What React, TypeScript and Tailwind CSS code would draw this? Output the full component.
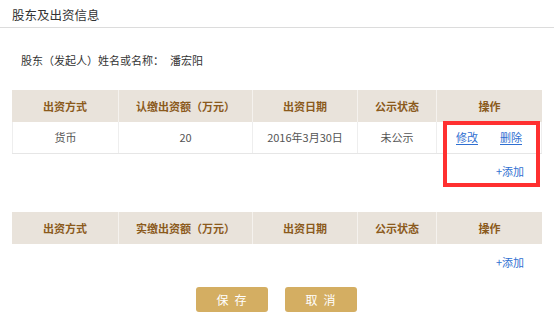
import React from 'react';

const cols = ['w-[106px]', 'w-[134px]', 'w-[105px]', 'w-[79px]', 'w-[106px]'];

const HeaderRow: React.FC<{ labels: string[] }> = ({ labels }) => (
  <div className="flex h-[32px] bg-[#e9e3db] text-[#8b5a1c] font-bold">
    {labels.map((l, i) => (
      <div
        key={l}
        className={`${cols[i]} flex items-center justify-center ${i > 0 ? 'border-l border-[#f5f2ee]' : ''}`}
      >
        {l}
      </div>
    ))}
  </div>
);

const AddRow: React.FC<{ h: string }> = ({ h }) => (
  <div className={`flex ${h} items-center justify-end pr-[18px]`}>
    <a className="text-[#2f6fd1] cursor-pointer">+添加</a>
  </div>
);

export default function App() {
  return (
    <div className="w-[554px] h-[318px] bg-white text-[11px] text-[#333] font-['Noto_Sans_CJK_SC',sans-serif]">
      <div className="h-[28px] border-b border-[#dcdcdc] pl-[12px] pt-[6px] text-[12.5px] leading-[18px] text-[#333]">
        股东及出资信息
      </div>

      <div className="mt-[22px] pl-[21px] leading-[20px] flex">
        <span>股东（发起人）姓名或名称：</span>
        <span className="ml-[6px]">潘宏阳</span>
      </div>

      <div className="relative mx-[12px] mt-[20px]">
        <HeaderRow labels={['出资方式', '认缴出资额（万元）', '出资日期', '公示状态', '操作']} />
        <div className="flex h-[32px] border-b border-[#e6e6e6] text-[#555]">
          <div className={`${cols[0]} flex items-center justify-center border-l border-[#eee]`}>货币</div>
          <div className={`${cols[1]} flex items-center justify-center border-l border-[#eee]`}>20</div>
          <div className={`${cols[2]} flex items-center justify-center border-l border-[#eee]`}>2016年3月30日</div>
          <div className={`${cols[3]} flex items-center justify-center border-l border-[#eee]`}>未公示</div>
          <div className={`${cols[4]} flex items-center justify-center gap-[22px] border-x border-[#eee]`}>
            <a className="text-[#2f6fd1] underline underline-offset-2 cursor-pointer">修改</a>
            <a className="text-[#2f6fd1] underline underline-offset-2 cursor-pointer">删除</a>
          </div>
        </div>
        <AddRow h="h-[34px]" />
        <div className="absolute left-[431px] top-[31px] w-[97px] h-[66px] border-[4px] border-[#ff3030]" />
      </div>

      <div className="mx-[12px] mt-[24px]">
        <HeaderRow labels={['出资方式', '实缴出资额（万元）', '出资日期', '公示状态', '操作']} />
        <AddRow h="h-[36px]" />
      </div>

      <div className="mt-[7px] flex justify-center gap-[17px] pr-[2px]">
        <button className="w-[72px] h-[25px] rounded-[3px] bg-[#d4ae62] text-white text-[12px] tracking-[6px] pl-[6px]">
          保存
        </button>
        <button className="w-[72px] h-[25px] rounded-[3px] bg-[#d4ae62] text-white text-[12px] tracking-[6px] pl-[6px]">
          取消
        </button>
      </div>
    </div>
  );
}
